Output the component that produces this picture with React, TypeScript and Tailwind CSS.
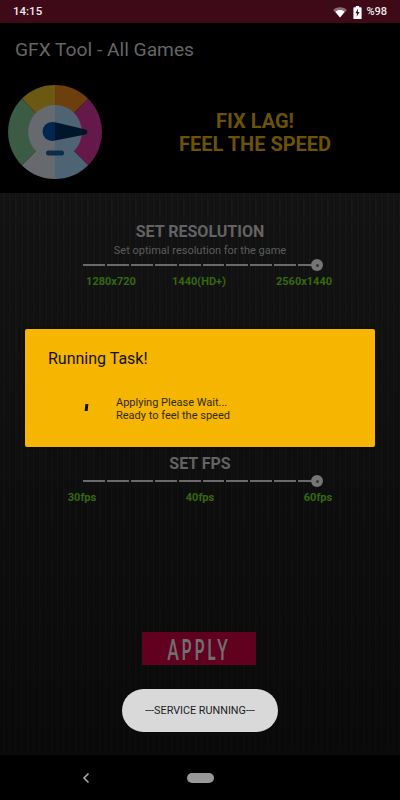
import { ReactNode } from 'react'

function StatusIcons() {
  return (
    <div className="flex items-center">
      <svg width="14" height="11" viewBox="0 0 15 12" className="mr-[6px]">
        <path d="M0 3.200C2 1.200 4.600.2 7.500.2s5.500 1 7.500 3L7.500 11.500z" fill="#8a6f77" />
        <path d="M2.500 5.200C3.900 4 5.600 3.400 7.500 3.400s3.600.6 5 1.800L7.500 11.500z" fill="#ffffff" />
      </svg>
      <svg width="9" height="13" viewBox="0 0 11 15" preserveAspectRatio="none" className="mr-[4px]">
        <path d="M3.500 0h4v1.500h2a1 1 0 0 1 1 1V14a1 1 0 0 1-1 1h-8a1 1 0 0 1-1-1V2.500a1 1 0 0 1 1-1h2z" fill="#ffffff" />
        <path d="M6.200 3 3 8.500h2L4.500 12.500 8 6.800H5.800z" fill="#3f0a18" />
      </svg>
      <span className="text-[11px] font-medium text-[#ececec]">%98</span>
    </div>
  )
}

function Gauge() {
  return (
    <svg width="110" height="118" viewBox="0 0 110 118" className="shrink-0">
      <path d="M55 57L21.800 23.800A47 47 0 0 0 21.800 90.200z" fill="#3c5b45" />
      <path d="M55 57L21.800 23.800A47 47 0 0 1 55 10z" fill="#6b5812" />
      <path d="M55 57V10A47 47 0 0 1 88.200 23.800z" fill="#6c3f0d" />
      <path d="M55 57L88.200 23.800A47 47 0 0 1 88.200 90.200z" fill="#64194a" />
      <path d="M55 57L21.800 90.200A47 47 0 0 0 55 104z" fill="#66696d" />
      <path d="M55 57V104A47 47 0 0 0 88.200 90.200z" fill="#4e6373" />
      <path d="M55 30A27 27 0 0 0 36 76L55 80z" fill="#66696d" />
      <path d="M55 30A27 27 0 0 1 74 76L55 80z" fill="#4e6373" />
      <path d="M52 47A9.500 9.500 0 0 0 52 66L55 65.500V47.200z" fill="#00274f" />
      <path d="M55 47.200L85.500 54.400A2.700 2.700 0 0 1 85.500 59.600L55 65.500z" fill="#00162b" />
      <rect x="46" y="75.500" width="18" height="5" rx="2.500" fill="#0d2c4a" />
    </svg>
  )
}

function Slider() {
  return (
    <div className="relative flex h-3 w-[240px] items-center gap-[2px] pr-[3px]">
      {Array.from({ length: 10 }).map((_, i) => (
        <div key={i} className="h-[2px] flex-1 bg-[#6a6a6a]" />
      ))}
      <div className="absolute right-0 flex h-3 w-3 items-center justify-center rounded-full bg-[#757575]">
        <div className="h-[3px] w-[3px] rounded-full bg-[#333333]" />
      </div>
    </div>
  )
}

function Label({ children, center }: { children: ReactNode; center: string }) {
  return (
    <span className={`absolute top-0 -translate-x-1/2 whitespace-nowrap text-[11px] font-bold leading-[14px] text-[#36690f] ${center}`}>
      {children}
    </span>
  )
}

export default function App() {
  return (
    <div className="relative flex h-[800px] w-[400px] flex-col overflow-hidden bg-black font-['Roboto',sans-serif]">
      {/* status bar */}
      <div className="flex h-[23px] items-center justify-between bg-[#3f0a18] pl-[13px] pr-[13px] pt-[1px]">
        <span className="text-[11.500px] font-medium text-[#ececec]">14:15</span>
        <StatusIcons />
      </div>

      {/* app bar */}
      <div className="flex h-[52px] items-center pl-[15px] pt-[2px]">
        <span className="text-[19.200px] leading-none text-[#666666]">GFX Tool - All Games</span>
      </div>

      {/* hero */}
      <div className="flex h-[118px] items-center">
        <Gauge />
        <div className="flex-1 pb-[2px] text-center text-[20px] font-bold leading-[23px] text-[#6b5208]">
          <div>FIX LAG!</div>
          <div>FEEL THE SPEED</div>
        </div>
      </div>

      {/* settings */}
      <div className="flex h-[562px] flex-col items-center bg-[linear-gradient(180deg,rgba(0,0,0,0)_0%,rgba(0,0,0,0.5)_100%),repeating-linear-gradient(90deg,#161616_0px,#101010_2px,#191919_4px,#0e0e0e_6px)]">
        <div className="mt-[29px] text-[16px] font-bold leading-[20px] text-[#636363]">SET RESOLUTION</div>
        <div className="mt-[1px] text-[11px] leading-[15px] text-[#5c5c5c]">Set optimal resolution for the game</div>
        <div className="mt-[1px] flex w-full justify-center pl-[6px]"><Slider /></div>
        <div className="relative mt-[4px] h-[14px] w-full">
          <Label center="left-[111px]">1280x720</Label>
          <Label center="left-[199px]">1440(HD+)</Label>
          <Label center="left-[304px]">2560x1440</Label>
        </div>

        <div className="mt-[165px] text-[16px] font-bold leading-[20px] text-[#636363]">SET FPS</div>
        <div className="mt-[1px] flex w-full justify-center pl-[6px]"><Slider /></div>
        <div className="relative mt-[4px] h-[14px] w-full">
          <Label center="left-[82px]">30fps</Label>
          <Label center="left-[200px]">40fps</Label>
          <Label center="left-[318px]">60fps</Label>
        </div>

        <div className="mr-[2px] mt-[127px] flex h-[33px] w-[114px] items-center justify-center bg-[#62001f]">
          <span className="inline-block scale-y-[1.8] font-['Lato',sans-serif] text-[16px] font-bold leading-none tracking-[3px] text-[#6f6f6f]">
            APPLY
          </span>
        </div>
      </div>

      {/* nav bar */}
      <div className="relative flex flex-1 items-center justify-center">
        <svg width="10" height="12" viewBox="0 0 10 12" className="absolute left-[81px] top-[17px]">
          <path d="M7.500 1.500 3 6l4.500 4.500" fill="none" stroke="#a8a8a8" strokeWidth="1.600" />
        </svg>
        <div className="mb-[-1px] h-[10px] w-[27px] rounded-full bg-[#999999]" />
      </div>

      {/* dialog */}
      <div className="absolute left-[25px] top-[329px] h-[118px] w-[350px] rounded-[2px] bg-[#f5b500] shadow-[0_0_3px_rgba(0,0,0,0.6)]">
        <div className="pl-[23px] pt-[20px] text-[16px] leading-[20px] text-[#111111]">Running Task!</div>
        <div className="relative mt-[27px] pl-[91px] text-[11px] leading-[13px] text-[#2e2a10]">
          <div className="absolute left-[60px] top-[8px] h-[7px] w-[3px] skew-x-[-6deg] bg-[#111111]" />
          <div>Applying Please Wait...</div>
          <div>Ready to feel the speed</div>
        </div>
      </div>

      {/* toast */}
      <div className="absolute left-[122px] top-[689px] flex h-[43px] w-[156px] items-center justify-center rounded-full bg-[#d9d9d9] pt-[2px] text-[10.800px] text-[#1c1c1c]">
        ---SERVICE RUNNING---
      </div>
    </div>
  )
}
